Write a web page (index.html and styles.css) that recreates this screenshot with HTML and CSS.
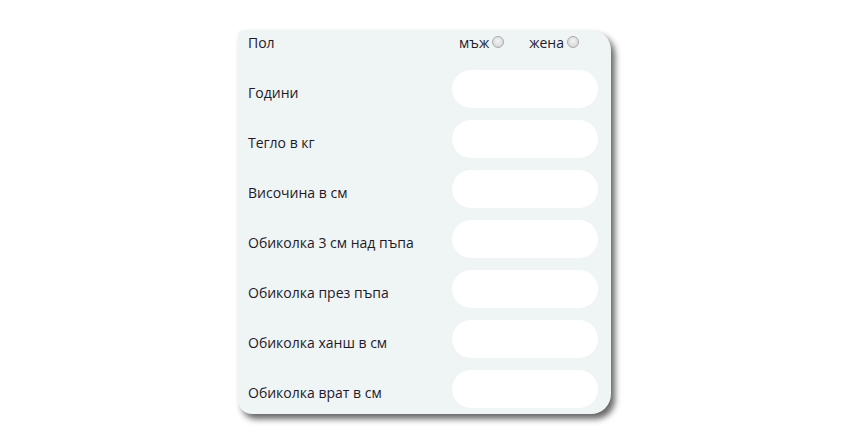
FILE: index.html
```html
<!DOCTYPE html>
<html lang="bg">
<head>
<meta charset="utf-8">
<link rel="stylesheet" href="styles.css">
</head>
<body>
<div class="page">
  <form class="card">
    <div class="row row-sex">
      <span class="label">Пол</span>
      <div class="choices">
        <label class="choice">мъж<span class="radio"></span></label>
        <label class="choice">жена<span class="radio"></span></label>
      </div>
    </div>
    <div class="row"><span class="label">Години</span><span class="field"></span></div>
    <div class="row"><span class="label">Тегло в кг</span><span class="field"></span></div>
    <div class="row"><span class="label">Височина в см</span><span class="field"></span></div>
    <div class="row"><span class="label">Обиколка 3 см над пъпа</span><span class="field"></span></div>
    <div class="row"><span class="label">Обиколка през пъпа</span><span class="field"></span></div>
    <div class="row"><span class="label">Обиколка ханш в см</span><span class="field"></span></div>
    <div class="row"><span class="label">Обиколка врат в см</span><span class="field"></span></div>
  </form>
</div>
</body>
</html>
```
FILE: styles.css
```css
html, body {
  margin: 0;
  padding: 0;
  background: #ffffff;
}
body {
  width: 851px;
  height: 445px;
  overflow: hidden;
  font-family: "Open Sans", "Noto Sans", sans-serif;
  font-size: 14px;
  color: #1e1a2a;
}
.page {
  display: flex;
  justify-content: flex-start;
  padding: 30px 0 0 238px;
}
.card {
  width: 373px;
  height: 384px;
  box-sizing: border-box;
  background: #eff4f4;
  border-radius: 5px 20px 20px 14px;
  box-shadow: 4px 5px 6px rgba(0, 0, 0, 0.6);
  padding: 0 13px 0 10px;
  display: flex;
  flex-direction: column;
}
.row {
  height: 50px;
  display: flex;
  align-items: center;
  justify-content: space-between;
}
.row-sex {
  height: 34px;
  align-items: flex-start;
  padding-top: 3px;
  box-sizing: border-box;
}
.label {
  padding-top: 6px;
  line-height: 19px;
}
.row-sex .label {
  padding-top: 0;
}
.choices {
  display: flex;
  gap: 25px;
  margin-right: 19px;
  line-height: 19px;
}
.choice {
  display: flex;
  align-items: flex-start;
}
.radio {
  width: 12px;
  height: 12px;
  margin: 3px 0 0 3px;
  border-radius: 50%;
  box-sizing: border-box;
  border: 1px solid #ababab;
  background: radial-gradient(circle at 50% 40%, #f4f4f4 0%, #dedede 60%, #c9c9c9 100%);
}
.field {
  width: 146px;
  height: 38px;
  background: #ffffff;
  border-radius: 19px;
}
```
